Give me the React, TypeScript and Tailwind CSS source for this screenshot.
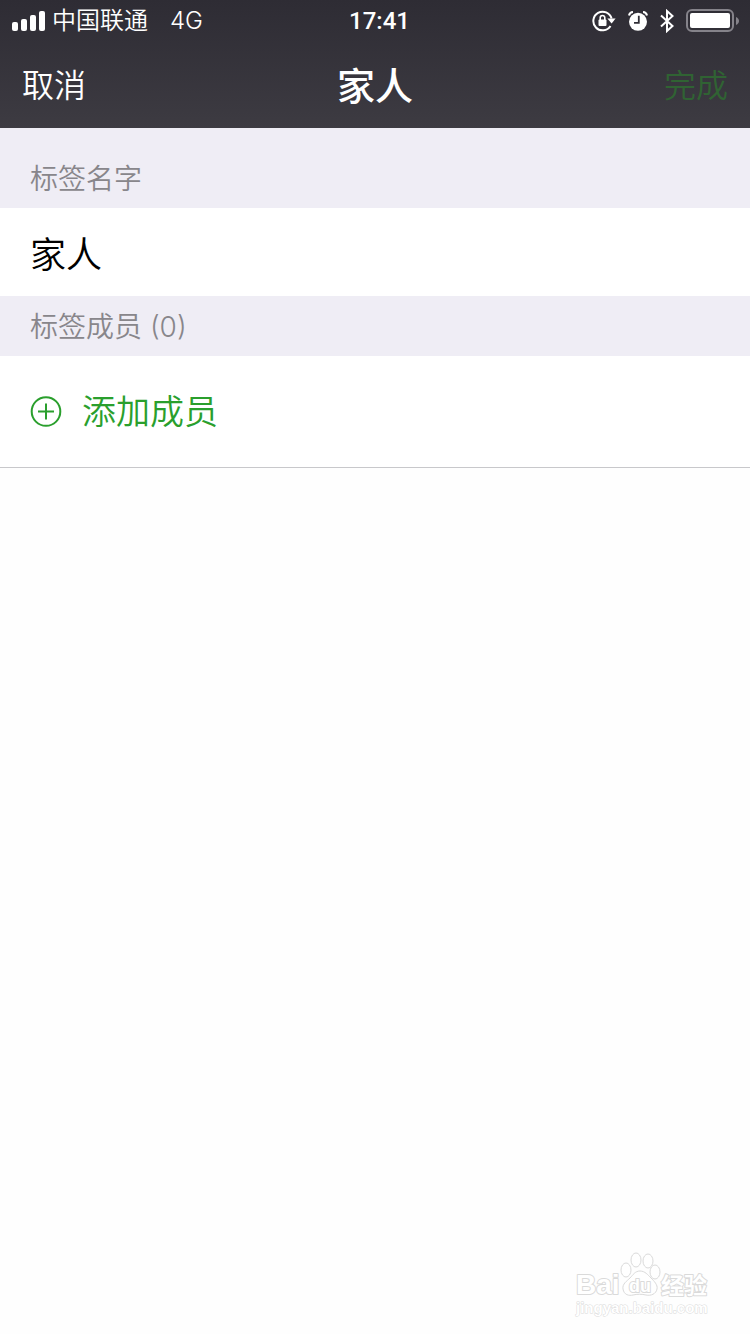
import React, { useState } from 'react';

function SignalIcon() {
  return (
    <svg viewBox="0 0 34 20" className="h-5 w-[34px]" fill="white">
      <rect x="0" y="11" width="6" height="9" rx="2" />
      <rect x="9" y="8" width="6" height="12" rx="2" />
      <rect x="18" y="4" width="6" height="16" rx="2" />
      <rect x="27" y="0" width="6" height="20" rx="2" />
    </svg>
  );
}

function RotationLockIcon() {
  return (
    <svg viewBox="0 0 24 22" className="h-[22px] w-6" fill="none" stroke="white" strokeWidth="2">
      <path d="M18.5 16A9.300 9.300 0 1 1 19.600 8.500" />
      <path d="M15.400 8.500h8.200l-4 5z" fill="white" stroke="none" />
      <rect x="6.500" y="9.500" width="8" height="6.500" rx="1" fill="white" stroke="none" />
      <path d="M8.200 10.500V7.800a2.300 2.300 0 0 1 4.600 0v2.700" strokeWidth="1.600" />
    </svg>
  );
}

function AlarmIcon() {
  return (
    <svg viewBox="0 0 20 20" className="size-5" fill="none" stroke="white">
      <circle cx="10" cy="10.800" r="9" fill="white" stroke="none" />
      <path d="M1 4.500C1.400 2.500 3 1.100 5 1M15 1C17 1.100 18.600 2.500 19 4.500" strokeWidth="2" />
      <path d="M10.800 4.800v7H6" stroke="#302e36" strokeWidth="1.800" />
    </svg>
  );
}

function BluetoothIcon() {
  return (
    <svg viewBox="0 0 14 24" className="h-6 w-3.5" fill="none" stroke="white" strokeWidth="2">
      <path d="M1 6.500 12.500 17 7 22V2l5.500 5L1 17.500" />
    </svg>
  );
}

function BatteryIcon() {
  return (
    <svg viewBox="0 0 53 24" className="h-6 w-[53px]">
      <rect x="1" y="1" width="46" height="21" rx="5" fill="none" stroke="#85838a" strokeWidth="2" />
      <rect x="4" y="4" width="40" height="15" rx="2" fill="white" />
      <path d="M50 8c4 1.500 4 6.500 0 8z" fill="#85838a" />
    </svg>
  );
}

function PlusCircleIcon() {
  return (
    <svg viewBox="0 0 32 32" className="size-8" fill="none" stroke="#2a9f2d" strokeWidth="2">
      <circle cx="16" cy="15.500" r="14.300" />
      <path d="M8 15.500h16M16 7.500v16" />
    </svg>
  );
}

function StatusBar() {
  return (
    <div className="grid h-10 grid-cols-[1fr_auto_1fr] items-center pt-0.5 pr-[11px] pl-3 text-2xl leading-8">
      <div className="flex items-center gap-1.5">
        <SignalIcon />
        <span className="font-[350]">中国联通</span>
        <span className="ml-4 font-[350]">4G</span>
      </div>
      <span className="pl-2 font-['Roboto',sans-serif] font-medium">17:41</span>
      <div className="flex items-center justify-end gap-3">
        <RotationLockIcon />
        <AlarmIcon />
        <BluetoothIcon />
        <BatteryIcon />
      </div>
    </div>
  );
}

function Watermark() {
  return (
    <div className="pointer-events-none absolute right-10 bottom-4 w-[136px]">
      <svg viewBox="0 0 136 66" className="w-full" fill="white" stroke="#dadada" strokeLinejoin="round">
        <g fontFamily="'Liberation Sans', 'Noto Sans CJK SC', sans-serif" fontWeight="700" strokeWidth="2" paintOrder="stroke">
          <text x="2" y="42" fontSize="28">Bai</text>
          <text x="87" y="42" fontSize="23">经验</text>
        </g>
        <g strokeWidth="1">
          <path d="M66 19c-5 0-7 4-10 7s-8 6-7 11c1 6 6 7 10 6s9-1 13 0c5 1 10-1 11-6 1-4-3-8-6-11s-6-7-11-7z" />
          <ellipse cx="52" cy="18" rx="5" ry="7" />
          <ellipse cx="62" cy="8" rx="5" ry="7" />
          <ellipse cx="74" cy="9" rx="5" ry="7" />
          <ellipse cx="81" cy="20" rx="5" ry="7" />
        </g>
        <text
          x="55"
          y="40"
          fontSize="18"
          fontFamily="'Liberation Sans', sans-serif"
          fontWeight="700"
          strokeWidth="2"
          paintOrder="stroke"
        >
          du
        </text>
        <text
          x="2"
          y="61"
          fontSize="15"
          fontFamily="'Liberation Sans', sans-serif"
          fontWeight="700"
          strokeWidth="1"
          paintOrder="stroke"
        >
          jingyan.baidu.com
        </text>
      </svg>
    </div>
  );
}

export default function App() {
  const [name, setName] = useState('家人');

  return (
    <div className="relative min-h-screen bg-[#fefefe] font-['Inter','Noto_Sans_CJK_SC',sans-serif]">
      <header className="bg-linear-to-b from-[#2e2c34] to-[#3d3b42] text-white">
        <StatusBar />
        <nav className="grid h-[88px] grid-cols-[1fr_auto_1fr] items-center px-[22px] pt-1">
          <button type="button" className="justify-self-start text-[32px] font-[350]">取消</button>
          <h1 className="text-[38px] font-medium">家人</h1>
          <button type="button" className="justify-self-end text-[32px] font-[350] text-[#306333]">完成</button>
        </nav>
      </header>

      <main>
        <div className="bg-[#efedf5] pt-5">
          <label htmlFor="tag-name" className="flex h-[60px] items-center px-[30px] pt-0.5 text-[28px] font-[350] text-[#88868b]">
            标签名字
          </label>
        </div>
        <input
          id="tag-name"
          type="text"
          value={name}
          onChange={(e) => setName(e.target.value)}
          className="block h-[88px] w-full bg-white px-[30px] text-4xl font-[350] text-black outline-none"
        />
        <h2 className="flex h-[60px] items-center bg-[#efedf5] px-[30px] pt-0.5 text-[28px] font-[350] text-[#88868b]">
          标签成员 (0)
        </h2>
        <button
          type="button"
          className="flex h-28 w-full items-center gap-5 border-b border-[#c8c8cb] bg-white px-[30px] text-[34px] font-[350] text-[#2a9f2d]"
        >
          <PlusCircleIcon />
          添加成员
        </button>
      </main>

      <Watermark />
    </div>
  );
}
